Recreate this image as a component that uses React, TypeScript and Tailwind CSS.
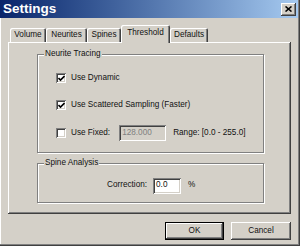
import React from 'react';

const sunken = 'shadow-[inset_1px_1px_#808080,inset_-1px_-1px_#fff,inset_2px_2px_#404040,inset_-2px_-2px_#d4d0c8]';
const raised = 'shadow-[inset_-1px_-1px_#404040,inset_1px_1px_#fff,inset_-2px_-2px_#808080]';

const CheckBox: React.FC<{ checked: boolean; label: string }> = ({ checked, label }) => (
  <div className="flex items-center h-[10px]">
    <div className={`w-[10px] h-[10px] bg-white flex items-center justify-center ${sunken}`}>
      {checked && (
        <svg width="7" height="7" viewBox="0 0 7 7">
          <path d="M0.5 3 L2.5 5 L6.5 1" stroke="#000" strokeWidth="1.6" fill="none" />
        </svg>
      )}
    </div>
    <span className="ml-[5px]">{label}</span>
  </div>
);

const GroupBox: React.FC<{ title: string; className: string; children?: React.ReactNode }> = ({ title, className, children }) => (
  <div className={`relative border border-[#808080] shadow-[1px_1px_#fff,inset_1px_1px_#fff] ${className}`}>
    <span className="absolute -top-[6px] left-[6px] px-[1px] bg-[#d4d0c8] leading-[10px]">{title}</span>
    {children}
  </div>
);

const tabs = [
  { name: 'Volume', w: 'w-[36px]' },
  { name: 'Neurites', w: 'w-[41px]' },
  { name: 'Spines', w: 'w-[34px]' },
  { name: 'Threshold', w: 'w-[49px]' },
  { name: 'Defaults', w: 'w-[38px]' },
];

export default function App() {
  return (
    <div className="w-[300px] h-[246px] bg-[#d4d0c8] flex flex-col font-['Liberation_Sans',Arial,sans-serif] text-[8.2px] text-[#111] shadow-[inset_-1px_-1px_#404040,inset_-2px_-2px_#808080,inset_1px_0_#fff]">
      <div className="h-[18px] mr-[2px] bg-gradient-to-r from-[#0a246a] to-[#a6caf0] flex items-center justify-between pl-[3px] pr-[2px]">
        <span className="text-white font-bold text-[13.5px] leading-none">Settings</span>
        <div className={`w-[15px] h-[13px] bg-[#d4d0c8] flex items-center justify-center ${raised}`}>
          <svg width="7" height="6" viewBox="0 0 7 6">
            <path d="M0.5 0.5 L6.5 5.5 M6.5 0.5 L0.5 5.5" stroke="#000" strokeWidth="1.6" />
          </svg>
        </div>
      </div>

      <div className="flex items-end mt-[7px] ml-[10px] -mb-[1px] relative z-10 h-[18px]">
        {tabs.map(t => {
          const sel = t.name === 'Threshold';
          return (
            <div
              key={t.name}
              className={`${t.w} flex items-center justify-center bg-[#d4d0c8] rounded-t-[2px] shadow-[inset_1px_1px_#fff,inset_-1px_0_#404040,inset_-2px_0_#808080] ${
                sel ? 'h-[18px] pb-[2px]' : 'h-[14px] mb-[1px]'
              }`}
            >
              {t.name}
            </div>
          );
        })}
      </div>

      <div className={`ml-[8px] w-[283px] h-[172px] flex flex-col pl-[29px] pt-[12px] ${raised}`}>
        <GroupBox title="Neurite Tracing" className="w-[227px] h-[99px] flex flex-col pl-[18px] pt-[18px]">
          <CheckBox checked label="Use Dynamic" />
          <div className="mt-[17px]">
            <CheckBox checked label="Use Scattered Sampling (Faster)" />
          </div>
          <div className="mt-[18px] flex items-center h-[10px]">
            <CheckBox checked={false} label="Use Fixed:" />
            <div className={`ml-[9px] w-[47px] h-[16px] flex items-center pl-[3px] text-[#808080] ${sunken}`}>128.000</div>
            <span className="ml-[7px]">Range: [0.0 - 255.0]</span>
          </div>
        </GroupBox>

        <GroupBox title="Spine Analysis" className="mt-[10px] w-[227px] h-[40px] flex items-center">
          <div className="flex items-center mt-[5px] ml-[69px]">
            <span>Correction:</span>
            <div className={`ml-[6px] w-[28px] h-[16px] bg-white flex items-center pl-[3px] ${sunken}`}>0.0</div>
            <span className="ml-[7px]">%</span>
          </div>
        </GroupBox>
      </div>

      <div className="flex justify-end gap-[7px] mt-[8px] mr-[9px]">
        <div className="w-[59px] h-[18px] bg-[#d4d0c8] flex items-center justify-center shadow-[inset_0_0_0_1px_#000,inset_-2px_-2px_#404040,inset_2px_2px_#fff,inset_-3px_-3px_#808080]">
          OK
        </div>
        <div className={`w-[60px] h-[18px] bg-[#d4d0c8] flex items-center justify-center ${raised}`}>
          Cancel
        </div>
      </div>
    </div>
  );
}
